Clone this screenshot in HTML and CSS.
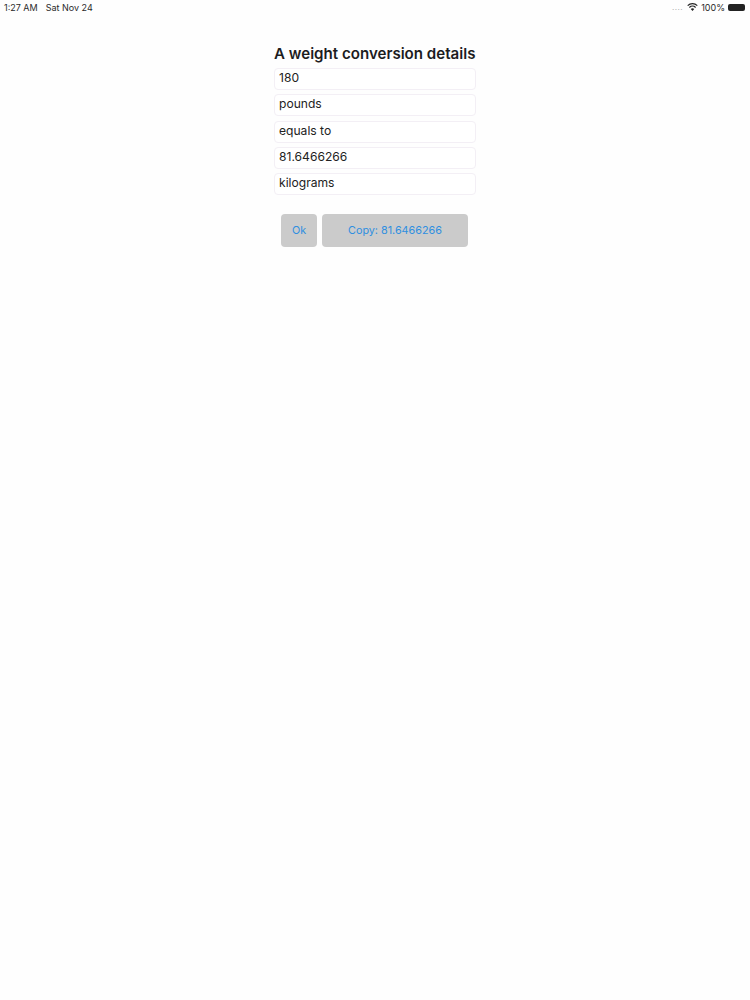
FILE: index.html
```html
<!DOCTYPE html>
<html>
<head>
    <title>Weight conversion details</title>
    <link rel="stylesheet" href="styles.css">
</head>
<body>
    <div class="status-bar">
        <div class="status-left">
            <span>1:27 AM</span>
            <span>Sat Nov 24</span>
        </div>
        <div class="status-right">
            <span class="signal">....</span>
            <svg class="wifi" width="11" height="8" viewBox="0 0 12 9">
                <path d="M0.6 3 A7.8 7.8 0 0 1 11.4 3" fill="none" stroke="#222" stroke-width="1.4"></path>
                <path d="M2.5 5 A5 5 0 0 1 9.5 5" fill="none" stroke="#222" stroke-width="1.4"></path>
                <path d="M6 9 L4 6.8 A3 3 0 0 1 8 6.8 Z" fill="#222"></path>
            </svg>
            <span>100%</span>
            <div class="battery"></div>
        </div>
    </div>
    <div class="dialog">
        <h1>A weight conversion details</h1>
        <div class="field">180</div>
        <div class="field">pounds</div>
        <div class="field">equals to</div>
        <div class="field">81.6466266</div>
        <div class="field">kilograms</div>
        <div class="buttons">
            <button class="btn btn-ok">Ok</button>
            <button class="btn btn-copy">Copy: 81.6466266</button>
        </div>
    </div>
</body>
</html>
```

FILE: styles.css
```css
html, body {
    height: 100%;
}
body {
    margin: 0;
    background: #fefefe;
    color: #1c1c1e;
    font-family: Inter, "Liberation Sans", sans-serif;
}
.status-bar {
    height: 14px;
    padding: 0 4px;
    display: flex;
    justify-content: space-between;
    align-items: center;
    font-size: 9px;
    color: #2a2a2a;
}
.status-left {
    display: flex;
    gap: 8px;
}
.status-right {
    display: flex;
    align-items: center;
    gap: 3px;
    margin-right: 1px;
}
.signal {
    color: #aaa;
    font-size: 8px;
    letter-spacing: 0.5px;
    margin-right: 1px;
}
.battery {
    width: 17px;
    height: 7px;
    background: #222;
    border-radius: 2px;
}
.dialog {
    width: 202px;
    margin: 30px auto 0;
}
h1 {
    margin: 0 0 4px;
    font-size: 15.1px;
    font-weight: 600;
    line-height: 20px;
    white-space: nowrap;
    color: #1c1c1e;
}
.field {
    box-sizing: border-box;
    height: 22px;
    margin-bottom: 4.3px;
    padding-left: 4px;
    border: 1px solid #f3eff5;
    border-radius: 4px;
    background: #fff;
    font-size: 12.1px;
    line-height: 18px;
    color: #222;
}
.buttons {
    display: flex;
    gap: 5px;
    margin-top: 19px;
    padding-left: 7px;
}
.btn {
    height: 33px;
    border: none;
    border-radius: 4px;
    background: #cbcbcb;
    color: #2f8fe0;
    font-family: inherit;
    font-size: 10.8px;
    padding: 0;
}
.btn-ok {
    width: 36px;
}
.btn-copy {
    width: 146px;
}
```
